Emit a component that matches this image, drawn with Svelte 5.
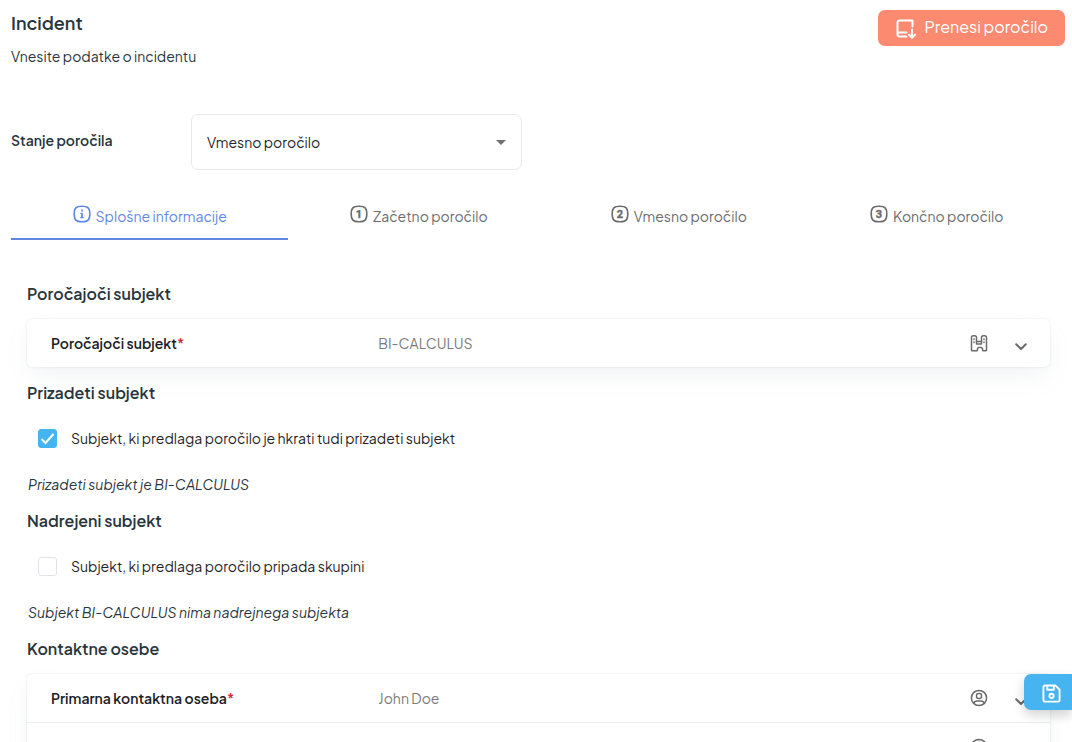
<script>
    let status = "vmesno";
    let activeTab = 0;
    let sameSubject = true;
    let inGroup = false;

    const tabs = ["Splošne informacije", "Začetno poročilo", "Vmesno poročilo", "Končno poročilo"];

    const reporting = [{ label: "Poročajoči subjekt", value: "BI-CALCULUS", icon: "castle" }];
    const contacts = [
        { label: "Primarna kontaktna oseba", value: "John Doe", icon: "person" },
        { label: "", value: "", icon: "person" }
    ];
</script>

{#snippet panel(rows)}
    <div class="panel">
        {#each rows as row}
            <div class="row">
                <span class="row-label">{row.label}{#if row.label}<span class="required">*</span>{/if}</span>
                <span class="row-value">{row.value}</span>
                {#if row.icon === "castle"}
                    <svg class="row-icon" viewBox="0 0 18 18" aria-hidden="true">
                        <path d="M1.500 16V3.500q0-1.800 1.800-1.800h1.400q1.800 0 1.800 1.800V7.500h5V3.500q0-1.800 1.800-1.800h1.400q1.800 0 1.800 1.800V16q0 .8-.8.8h-2.400q-.8 0-.8-.8v-1.500a3 3 0 0 0-5 0V16q0 .8-.8.8H2.300q-.8 0-.8-.8Z" />
                        <path d="M4 5v.5M4 8v.5M14 5v.5M14 8v.5M6.500 7.500v2.500h5V7.500" />
                    </svg>
                {:else}
                    <svg class="row-icon" viewBox="0 0 18 18" aria-hidden="true">
                        <circle cx="9" cy="9" r="7.600" />
                        <rect x="6.500" y="4.500" width="5" height="5" rx="2" />
                        <path d="M3.500 14q1.500-2 3.500-2h4q2 0 3.500 2" />
                    </svg>
                {/if}
                <button class="expand" aria-label="Razširi">
                    <svg viewBox="0 0 12 8" aria-hidden="true"><path d="M1.200 1.200 6 6l4.800-4.800" /></svg>
                </button>
            </div>
        {/each}
    </div>
{/snippet}

<main>
    <header>
        <div>
            <h1>Incident</h1>
            <p>Vnesite podatke o incidentu</p>
        </div>
        <button class="download">
            <svg viewBox="0 0 20 20" aria-hidden="true">
                <path d="M16.500 7.500V1.500H3.500Q1.500 1.500 1.500 3.500V15.500Q1.500 17.500 3.500 17.500H10.500M1.800 13.500H10.500M16 10.500V18.500M13 15.800l3 3 3-3" />
            </svg>
            Prenesi poročilo
        </button>
    </header>

    <div class="status">
        <label for="status">Stanje poročila</label>
        <div class="select">
            <select id="status" bind:value={status}>
                <option value="vmesno">Vmesno poročilo</option>
            </select>
            <svg viewBox="0 0 10 5" aria-hidden="true"><path d="M0 0h10L5 5Z" /></svg>
        </div>
    </div>

    <div class="tabs" role="tablist">
        {#each tabs as tab, i}
            <button role="tab" class:active={activeTab === i} aria-selected={activeTab === i} on:click={() => (activeTab = i)}>
                <svg viewBox="0 0 18 18" aria-hidden="true">
                    <path d="M9 1.200c6 0 7.800 1.800 7.800 7.800s-1.800 7.800-7.800 7.800S1.200 15 1.200 9 3 1.200 9 1.200Z" />
                    {#if i === 0}
                        <path d="M9 5v1M8 8.500h1v4M8 12.500h2" />
                    {:else}
                        <text x="9" y="13" text-anchor="middle">{i}</text>
                    {/if}
                </svg>
                {tab}
            </button>
        {/each}
    </div>

    <div class="content">
        <section>
            <h2>Poročajoči subjekt</h2>
            {@render panel(reporting)}
        </section>
        <section>
            <h2>Prizadeti subjekt</h2>
            <label class="check">
                <input type="checkbox" bind:checked={sameSubject} />
                Subjekt, ki predlaga poročilo je hkrati tudi prizadeti subjekt
            </label>
            <p class="note">Prizadeti subjekt je BI-CALCULUS</p>
        </section>
        <section>
            <h2>Nadrejeni subjekt</h2>
            <label class="check">
                <input type="checkbox" bind:checked={inGroup} />
                Subjekt, ki predlaga poročilo pripada skupini
            </label>
            <p class="note">Subjekt BI-CALCULUS nima nadrejnega subjekta</p>
        </section>
        <section>
            <h2>Kontaktne osebe</h2>
            {@render panel(contacts)}
        </section>
    </div>
</main>

<button class="save" aria-label="Shrani">
    <svg viewBox="0 0 20 20" aria-hidden="true">
        <path d="M3.500 1.500H14l4.500 4.500v10.500q0 2-2 2h-13q-2 0-2-2v-13q0-2 2-2ZM5.500 1.500v4.500h7v-4.500" />
        <circle cx="10" cy="12.500" r="2.200" />
    </svg>
</button>

<style>
    :global(body) {
        background: #fff;
        overflow: hidden;
    }

    main,
    button,
    select {
        font-family: "Plus Jakarta Sans", Inter, sans-serif;
        font-size: 14px;
        line-height: 20px;
    }

    main {
        height: 100vh;
        overflow-y: auto;
        scrollbar-width: none;
        box-sizing: border-box;
        padding: 10px 7px 0 11px;
        color: #29343d;
    }

    h1,
    h2,
    p {
        margin: 0;
    }

    button {
        border: 0;
        background: none;
        padding: 0;
        cursor: pointer;
    }

    svg {
        fill: none;
        stroke: currentColor;
        stroke-linecap: round;
        stroke-linejoin: round;
    }

    header {
        display: flex;
        justify-content: space-between;
        align-items: flex-start;
    }

    h1 {
        font-size: 18px;
        line-height: 26px;
        font-weight: 600;
        margin-bottom: 10px;
    }

    .download {
        display: flex;
        align-items: center;
        gap: 8px;
        height: 36px;
        padding: 0 17px 2px 18px;
        border-radius: 7px;
        background: #fb8a71;
        color: #fff;
        font-size: 16px;
    }

    .download svg {
        width: 20px;
        height: 20px;
        margin-top: 4px;
        stroke-width: 2;
    }

    .status {
        display: flex;
        align-items: center;
        margin-top: 48px;
    }

    .status label {
        width: 180px;
        padding-bottom: 4px;
        font-weight: 600;
    }

    .select {
        position: relative;
        width: 331px;
    }

    .select select {
        appearance: none;
        width: 100%;
        height: 56px;
        padding: 0 32px 0 15px;
        border: 1px solid #e7e9eb;
        border-radius: 7px;
        background: #fff;
        color: #1f2428;
    }

    .select svg {
        position: absolute;
        right: 16px;
        top: 26px;
        width: 10px;
        height: 5px;
        fill: #717171;
        stroke: none;
        pointer-events: none;
    }

    .tabs {
        display: flex;
        margin-top: 22px;
    }

    .tabs button {
        flex: 1 1 auto;
        display: flex;
        align-items: center;
        justify-content: center;
        gap: 5px;
        height: 48px;
        padding-top: 2px;
        border-bottom: 2px solid transparent;
        color: #6b6b6b;
    }

    .tabs svg {
        width: 18px;
        height: 18px;
        margin-bottom: 4px;
        stroke-width: 1.6;
    }

    .tabs text {
        fill: currentColor;
        stroke: currentColor;
        stroke-width: 0.4;
        font: bold 11px Roboto, sans-serif;
    }

    .tabs .active {
        color: #5d87e8;
        border-color: #5d87e0;
    }

    .content {
        padding: 40px 15px 24px 16px;
    }

    h2 {
        padding: 2px 0 13px;
        font-size: 16px;
        line-height: 24px;
        font-weight: 600;
    }

    .panel {
        margin-bottom: 12px;
        border-radius: 5px;
        box-shadow: 0 0 2px rgba(145, 158, 171, 0.3), 0 12px 24px -4px rgba(145, 158, 171, 0.12);
    }

    .row {
        display: flex;
        align-items: center;
        height: 48px;
        padding: 0 23px 0 24px;
        color: #6b6b6b;
    }

    .row + .row {
        border-top: 1px solid #ebedef;
    }

    .row-label {
        width: 33.333%;
        color: #1b2025;
        font-weight: 600;
    }

    .required {
        color: #d02b3c;
    }

    .row-value {
        flex: 1;
        padding-left: 2px;
        color: #7a7a7a;
    }

    .row-icon {
        width: 18px;
        height: 18px;
        stroke-width: 1.5;
    }

    .expand {
        display: flex;
        margin: 8px 0 0 27px;
        color: #6b6b6b;
    }

    .expand svg {
        width: 12px;
        height: 8px;
        stroke-width: 2;
    }

    .check {
        display: flex;
        align-items: center;
        gap: 14px;
        height: 40px;
        margin: 0 0 10px;
        padding-left: 11px;
        color: #1f2428;
    }

    .check input {
        appearance: none;
        width: 19px;
        height: 19px;
        margin: 0;
        border: 1px solid #e0e4e8;
        border-radius: 3px;
    }

    .check input:checked {
        border-color: #46b4f0;
        background: #46b4f0 url('data:image/svg+xml,<svg xmlns="http://www.w3.org/2000/svg" viewBox="0 0 17 17"><path d="M2.500 9l4 4 8-9" fill="none" stroke="white" stroke-width="2"/></svg>') center / 17px 17px;
    }

    .note {
        padding: 6px 0 13px 1px;
        font-style: italic;
    }

    .save {
        position: fixed;
        right: 0;
        top: 674px;
        display: grid;
        place-items: center;
        width: 48px;
        height: 36px;
        padding: 2px 0 0 7px;
        border-radius: 7px 0 0 7px;
        background: #46b4f0;
        color: #fff;
        box-shadow: 0 5px 12px rgba(0, 0, 0, 0.18);
    }

    .save svg {
        width: 19px;
        height: 19px;
        stroke-width: 2;
    }
</style>
